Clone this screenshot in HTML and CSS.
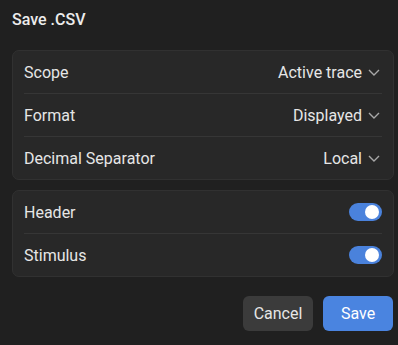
FILE: index.html
```html
<!DOCTYPE html>
<html lang="en">
<head>
  <meta charset="UTF-8">
  <title>Save .CSV</title>
  <link rel="stylesheet" href="styles.css">
</head>
<body>
  <div class="dialog">
    <h1 class="title">Save .CSV</h1>

    <div class="card">
      <div class="row">
        <span>Scope</span>
        <span class="select">Active trace
          <svg class="chev" width="12" height="7" viewBox="0 0 12 7"><path d="M1 1l5 5 5-5" fill="none" stroke="#a8a8a8" stroke-width="1.4"/></svg>
        </span>
      </div>
      <div class="row">
        <span>Format</span>
        <span class="select">Displayed
          <svg class="chev" width="12" height="7" viewBox="0 0 12 7"><path d="M1 1l5 5 5-5" fill="none" stroke="#a8a8a8" stroke-width="1.4"/></svg>
        </span>
      </div>
      <div class="row">
        <span>Decimal Separator</span>
        <span class="select">Local
          <svg class="chev" width="12" height="7" viewBox="0 0 12 7"><path d="M1 1l5 5 5-5" fill="none" stroke="#a8a8a8" stroke-width="1.4"/></svg>
        </span>
      </div>
    </div>

    <div class="card">
      <div class="row">
        <span>Header</span>
        <span class="toggle on"><span class="knob"></span></span>
      </div>
      <div class="row">
        <span>Stimulus</span>
        <span class="toggle on"><span class="knob"></span></span>
      </div>
    </div>

    <div class="actions">
      <button class="btn cancel">Cancel</button>
      <button class="btn save">Save</button>
    </div>
  </div>
</body>
</html>
```

FILE: styles.css
```css
body {
  margin: 0;
  background-color: #202020;
  color: #e6e6e6;
  font-family: Roboto, "Liberation Sans", sans-serif;
}
.dialog {
  padding: 8px 4px 14px 12px;
}
.title {
  font-size: 16px;
  font-weight: 500;
  margin: 0 0 18px 0;
  line-height: 24px;
  color: #ececec;
}
.card {
  background-color: #282828;
  border: 1px solid #313131;
  border-radius: 7px;
  padding: 0 11px;
  margin-bottom: 10px;
}
.row {
  display: flex;
  justify-content: space-between;
  align-items: center;
  height: 42px;
  font-size: 16px;
  border-bottom: 1px solid #363636;
}
.row:last-child {
  border-bottom: none;
}
.select {
  display: flex;
  align-items: center;
  gap: 6px;
}
.chev {
  margin-right: 2px;
}
.toggle {
  width: 33px;
  height: 18px;
  border-radius: 9px;
  background-color: #4a82dc;
  position: relative;
}
.knob {
  position: absolute;
  right: 3px;
  top: 2px;
  width: 14px;
  height: 14px;
  border-radius: 50%;
  background-color: #fff;
}
.actions {
  display: flex;
  justify-content: flex-end;
  gap: 10px;
  margin-top: 19px;
  margin-right: 1px;
}
.btn {
  width: 70px;
  height: 35px;
  border: none;
  border-radius: 6px;
  font-family: Roboto, "Liberation Sans", sans-serif;
  font-size: 16px;
  color: #e6e6e6;
}
.cancel {
  background-color: #3b3b3b;
}
.save {
  background-color: #4a84e0;
  color: #fff;
}
```
